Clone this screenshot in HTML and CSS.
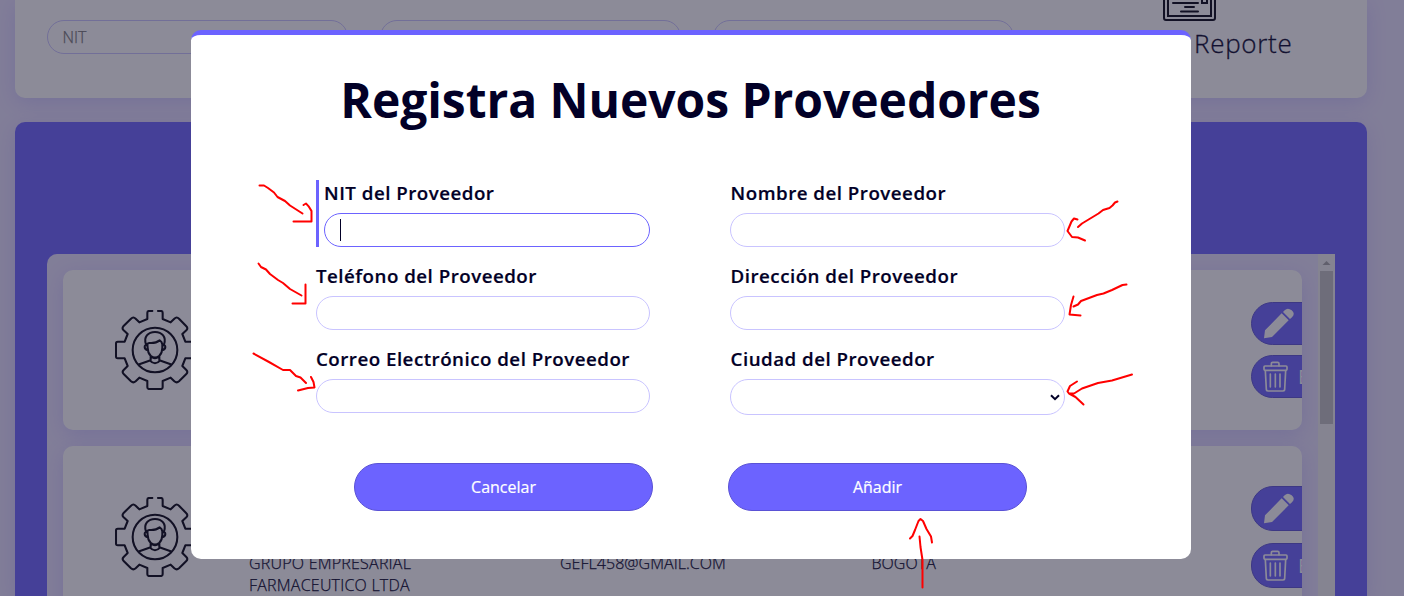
FILE: index.html
```html
<!DOCTYPE html>
<html lang="es">
<head>
<meta charset="utf-8">
<title>Proveedores</title>
<link rel="stylesheet" href="styles.css">
</head>
<body>
<svg class="defs" width="0" height="0" aria-hidden="true">
  <symbol id="gear" viewBox="45 30 240 240">
    <g fill="none" stroke="#020010" stroke-width="6.2" stroke-linecap="round" stroke-linejoin="round">
      <path d="M157 33H147Q142 33 142 38V57L118 67L107 56Q100 49 93 56L70 79Q65 85 71 91L83 102L74 125H53Q48 125 48 130V170Q48 175 53 175H74L83 198L71 210Q65 216 71 222L93 244Q100 250 107 244L118 233L142 243V262Q142 267 147 267H183Q188 267 188 262V243L212 233L223 244Q230 250 237 244L259 222Q265 216 259 210L247 198L256 175H277Q282 175 282 170V130Q282 125 277 125H256L247 102L259 91Q265 85 259 79L237 56Q230 49 223 56L212 67L188 57V38Q188 33 183 33H174"/>
      <circle cx="165" cy="150" r="67"/>
      <path d="M138 133C130 111 144 96 165 96S200 111 192 133M142 132Q144 128 150 129Q168 130 179 121Q186 125 187 133V144Q187 158 178 167Q165 178 152 167Q143 158 143 144ZM142 136Q134 134 134 141Q134 149 144 151M187 136Q196 134 196 141Q196 149 186 151M152 168V181L118 193M178 168V181L212 193M150 182Q165 198 180 182M158 173Q165 176 172 173"/>
    </g>
  </symbol>
  <symbol id="pencil" viewBox="0 0 93 93">
    <path d="M3 91L6 67L56 16L77 37L27 87Z M60 12L65 7Q74-2 86 7T87 28L81 33Z" fill="#fff"/>
  </symbol>
  <symbol id="trash" viewBox="0 0 75 93">
    <g fill="none" stroke="#fff" stroke-width="5" stroke-linejoin="round" stroke-linecap="round">
      <rect x="3" y="15" width="69" height="13" rx="3"/>
      <path d="M25 14V8Q25 4 29 4H44Q48 4 48 8V14M7 29L10 85Q10 90 15 90H60Q65 90 65 85L68 29M22 39V78M37 39V78M51 39V78"/>
    </g>
  </symbol>
</svg>

<div class="page">
  <section class="filters">
    <div class="filter">NIT</div>
    <div class="filter"></div>
    <div class="filter"></div>
    <div class="report">
      <svg width="53" height="53" viewBox="0 0 53 53" fill="none" stroke="#020010" stroke-width="2" stroke-linecap="round">
        <rect x="1" y="1" width="51" height="51" rx="2"/>
        <rect x="5" y="5" width="43" height="43"/>
        <path d="M10 35H35M22 39H31M18 43.5H35M39 30H44V35H39Z"/>
      </svg>
      <span class="report-text">Reporte</span>
    </div>
  </section>

  <section class="panel">
    <div class="list">
      <div class="rows">
        <article class="row">
          <svg class="gear"><use href="#gear"/></svg>
          <div class="cells"></div>
          <div class="actions">
            <div class="action"><svg width="31" height="31"><use href="#pencil"/></svg></div>
            <div class="action"><svg class="bin" width="25" height="31"><use href="#trash"/></svg><span>Eliminar</span></div>
          </div>
        </article>
        <article class="row row-tall">
          <svg class="gear"><use href="#gear"/></svg>
          <div class="cells">
            <p class="name">GRUPO EMPRESARIAL<br>FARMACEUTICO LTDA</p>
            <p>GEFL458@GMAIL.COM</p>
            <p>BOGOTA</p>
          </div>
          <div class="actions">
            <div class="action"><svg width="31" height="31"><use href="#pencil"/></svg></div>
            <div class="action"><svg class="bin" width="25" height="31"><use href="#trash"/></svg><span>Eliminar</span></div>
          </div>
        </article>
      </div>
      <div class="scrollbar">
        <svg width="17" height="17"><path d="M4.5 11L8.5 7L12.5 11Z" fill="#a3a3a3"/></svg>
        <div class="thumb"></div>
      </div>
    </div>
  </section>
</div>

<div class="overlay">
  <form class="modal">
    <h1>Registra Nuevos Proveedores</h1>
    <div class="fields">
      <div class="field active"><label>NIT del Proveedor</label><div class="input"><i class="caret"></i></div></div>
      <div class="field"><label>Nombre del Proveedor</label><div class="input"></div></div>
      <div class="field"><label>Teléfono del Proveedor</label><div class="input"></div></div>
      <div class="field"><label>Dirección del Proveedor</label><div class="input"></div></div>
      <div class="field"><label>Correo Electrónico del Proveedor</label><div class="input"></div></div>
      <div class="field"><label>Ciudad del Proveedor</label><div class="input select">
        <svg width="10" height="7" viewBox="0 0 10 7" fill="none" stroke="#020027" stroke-width="2"><path d="M1 1.2L5 5.2L9 1.2"/></svg>
      </div></div>
    </div>
    <div class="buttons">
      <button type="button">Cancelar</button>
      <button type="button">Añadir</button>
    </div>
  </form>
</div>

<svg class="marks" width="1404" height="596" fill="none" stroke="#ff0000" stroke-width="2" stroke-linecap="round" stroke-linejoin="round">
  <path d="M259.5 185.5L264 185.5L268 188L274 192.500L277.500 197L285 201L290 205.500L302.500 213.500M303.500 205L306 203.500Q309 206 311.500 211V221.500H293.500"/>
  <path d="M258.500 263.500L261 267L266 269.500L270 274L278 280L283 283L290 289L301.500 295.500M305.500 284.500V303.500H292.500"/>
  <path d="M253.500 353.500L269 362L283 370H290L296 376L300.500 377.500L306 383M311 377L313.500 382L314.500 387.500L308 388L298 390.500"/>
  <path d="M1117.500 201.500L1115 202.500L1112.500 205.500L1109.500 208L1103 210L1098.500 213.500L1082 223.500L1078 227M1077.500 219.500L1074 218.500L1071.500 221.500L1067.500 231L1072 237L1078 237.500L1085 240.500"/>
  <path d="M1126.500 284.500L1122.500 285L1112 290L1103.500 293.500L1097 295L1081 301L1078 304.500L1073.500 306.500M1073.500 296.500L1071 305L1069.500 314.500L1080.500 315.500"/>
  <path d="M1132 374.500L1112 380.500L1098 383L1082 388.500L1074 393.500H1069M1077 381.500L1070 386L1067.500 391.500L1069 393.500L1075.500 397L1083.500 404.500"/>
  <path d="M910 538.500L912.500 536L915 530L918.500 521L920.500 519L923 521L926.500 529L931 536.500L932 542.500M919.500 536.500L920.500 547L922.500 560V587.500"/>
</svg>
</body>
</html>
```
FILE: styles.css
```css
* { box-sizing: border-box; }

body {
  margin: 0;
  height: 596px;
  overflow: hidden;
  position: relative;
  background: #e9e3ff;
  color: #020027;
  font-family: "Open Sans", sans-serif;
  font-size: 16px;
}

.defs { position: absolute; }

.page {
  height: 596px;
  padding: 0 37px 0 15px;
  display: flex;
  flex-direction: column;
  gap: 24px;
  overflow: hidden;
}

.filters {
  flex: none;
  height: 98px;
  padding: 20px 0 0 32px;
  display: flex;
  gap: 32.5px;
  background: #fff;
  border-radius: 0 0 10px 10px;
  box-shadow: 0 5px 20px rgba(108, 99, 255, .2);
}

.filter {
  flex: none;
  width: 300.5px;
  height: 34px;
  padding-left: 14.5px;
  border: 1px solid #c9c4ff;
  border-radius: 17px;
  line-height: 32px;
  font-weight: 300;
  -webkit-text-stroke: .25px;
  color: #757575;
}

.report {
  width: 170px;
  margin: -52px 0 0 116.5px;
  display: flex;
  flex-direction: column;
}

.report svg { flex: none; }

.report-text {
  margin: 4px 0 0 31.5px;
  font-size: 26px;
  line-height: 36px;
  font-weight: 300;
  -webkit-text-stroke: .3px;
  letter-spacing: .7px;
}

.panel {
  flex: 1;
  min-height: 0;
  padding: 132px 32px 0;
  background: #6c63ff;
  border-radius: 10px 10px 0 0;
  box-shadow: 0 5px 20px rgba(108, 99, 255, .2);
}

.list {
  height: 100%;
  display: flex;
  background: #e9e3ff;
  border-radius: 10px 0 0 0;
  overflow: hidden;
}

.rows {
  flex: 1;
  min-width: 0;
  padding: 16px;
  display: flex;
  flex-direction: column;
  gap: 16px;
}

.row {
  flex: none;
  height: 160px;
  padding-left: 52px;
  display: flex;
  align-items: center;
  background: #fff;
  border-radius: 10px;
  box-shadow: 0 5px 20px rgba(108, 99, 255, .2);
  overflow: hidden;
}

.row-tall { height: 182px; }

.gear { flex: none; width: 80px; height: 80px; }

.cells {
  flex: none;
  width: 1002px;
  margin-left: 54px;
  padding-top: 74px;
  display: grid;
  grid-template-columns: 311px 311.5px 1fr;
  font-weight: 300;
  -webkit-text-stroke: .25px;
  line-height: 22px;
}

.cells p { margin: 0; letter-spacing: .04px; }

.cells .name { letter-spacing: .22px; }

.actions {
  flex: none;
  display: flex;
  flex-direction: column;
  gap: 10px;
}

.row-tall .actions { gap: 12px; }

.action {
  width: 140px;
  height: 43px;
  padding-left: 11px;
  display: flex;
  align-items: center;
  background: #6c63ff;
  border: 1px solid #5a52d5;
  border-radius: 22px;
  color: #fff;
  font-size: 20px;
}

.row-tall .action { height: 45px; }

.action span { margin-left: 10px; }

.scrollbar { flex: none; width: 17px; background: #f1f1f1; }

.scrollbar svg { display: block; }

.thumb { width: 13px; height: 153px; margin: 0 auto; background: #c1c1c1; }

.overlay {
  position: absolute;
  inset: 0;
  padding: 30px 0 0 191px;
  background: rgba(34, 32, 57, .52);
}

.modal {
  width: 1000px;
  height: 529px;
  padding: 32px 125px 0;
  border-top: 5px solid #6c63ff;
  border-radius: 10px;
  background: #fff;
}

h1 {
  margin: 0 1px 0 0;
  font-size: 48px;
  line-height: 66px;
  font-weight: 700;
  letter-spacing: -.05px;
  text-align: center;
  white-space: nowrap;
}

.fields {
  margin-top: 47px;
  display: grid;
  grid-template-columns: 334px 335px;
  column-gap: 80px;
  row-gap: 16px;
}

.field { height: 67px; }

.active { padding-left: 5px; border-left: 3px solid #6c63ff; }

label {
  display: block;
  height: 33px;
  line-height: 26px;
  font-size: 18.72px;
  font-weight: 600;
  -webkit-text-stroke: .2px;
  letter-spacing: .5px;
  white-space: nowrap;
}

.field:nth-child(even) label { padding-left: .6px; }

.input {
  height: 34px;
  padding: 0 4px 0 15px;
  display: flex;
  align-items: center;
  border: 1px solid #c9c4ff;
  border-radius: 17px;
}

.active .input { border-color: #6c63ff; }

.select { height: 36px; justify-content: flex-end; border-radius: 18px; }

.caret { width: 1px; height: 22px; background: #020027; }

.buttons {
  margin: 50px 0 0 38px;
  display: flex;
  gap: 75px;
}

button {
  width: 299px;
  height: 48px;
  padding: 0;
  background: #6c63ff;
  border: 1px solid #5a52d5;
  border-radius: 24px;
  color: #fff;
  font: 400 16px "Open Sans", sans-serif;
  -webkit-text-stroke: .2px;
}

.marks { position: absolute; inset: 0; pointer-events: none; }
```
